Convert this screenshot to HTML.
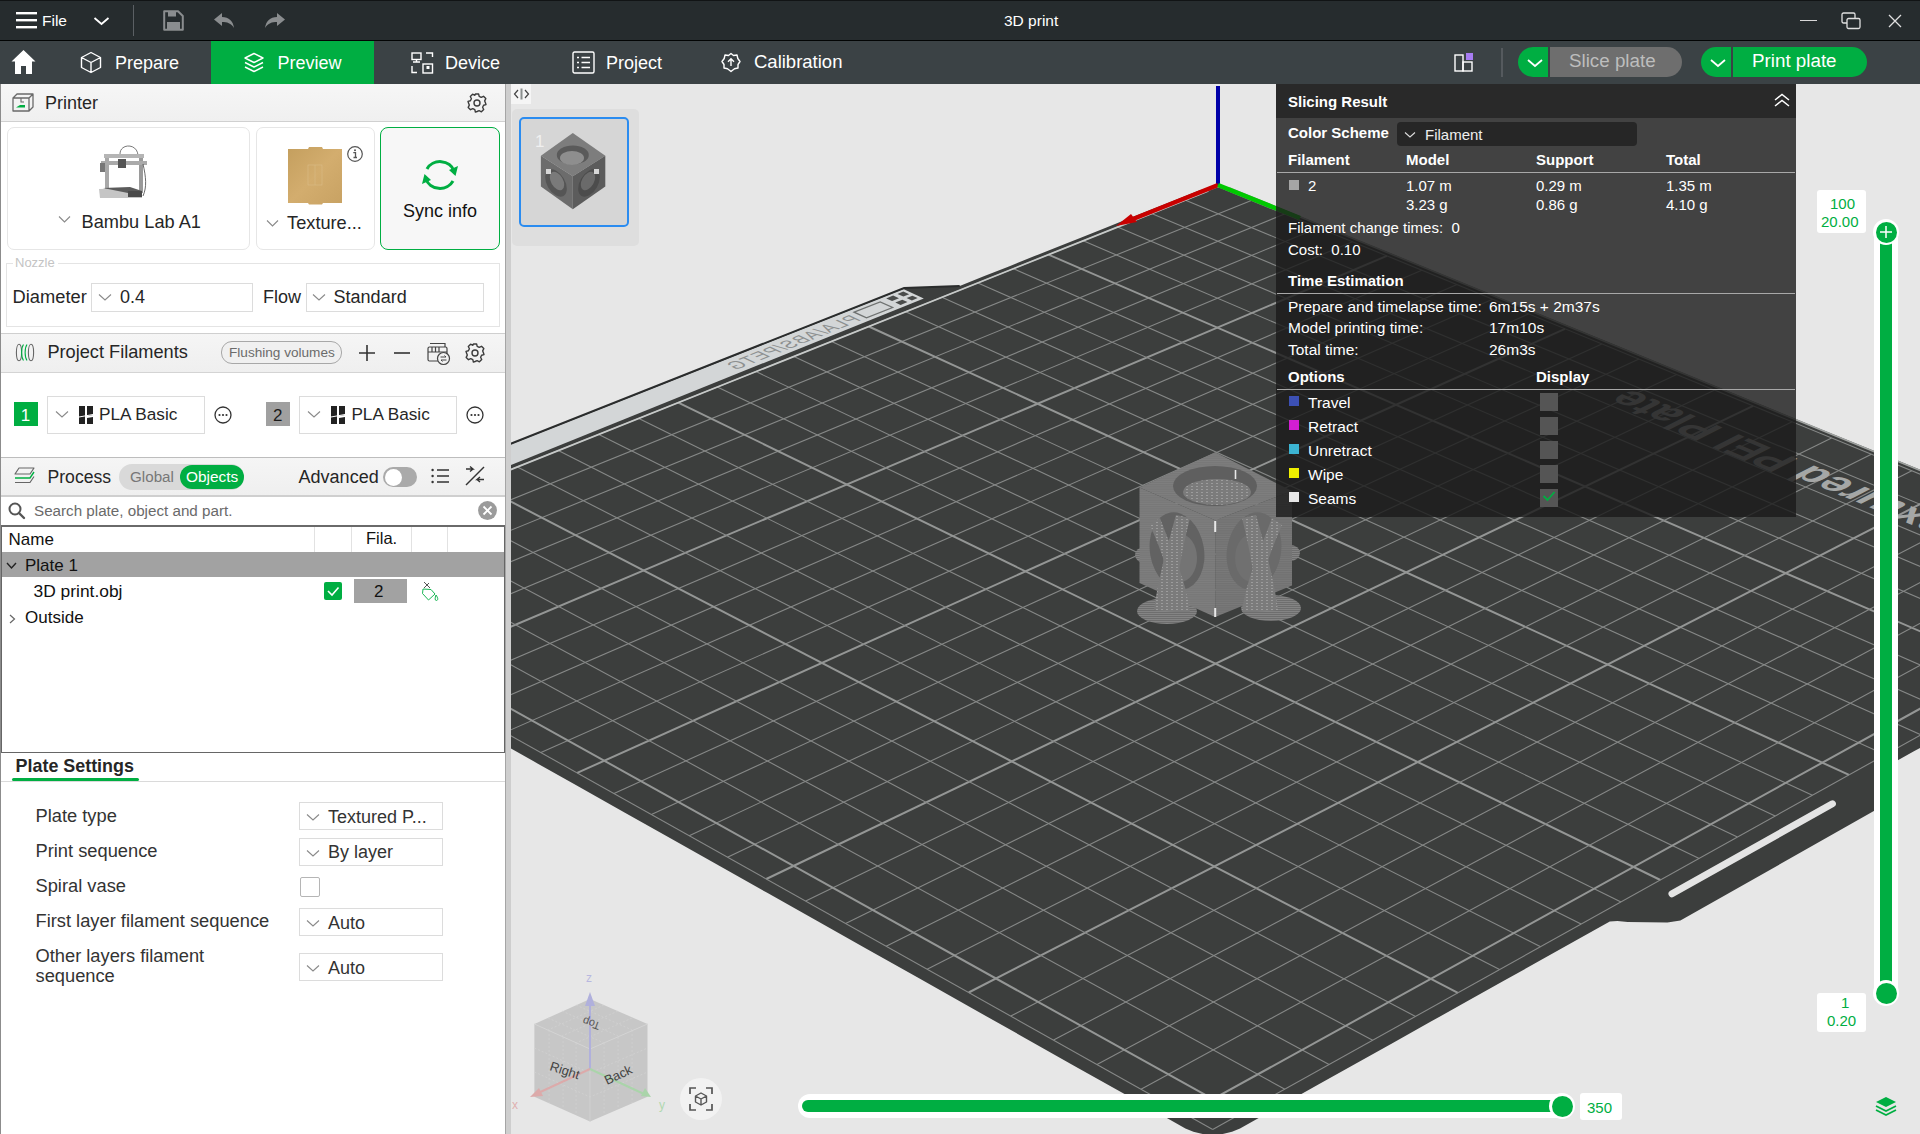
<!DOCTYPE html>
<html><head><meta charset="utf-8"><style>
html,body{margin:0;padding:0;width:1920px;height:1134px;overflow:hidden;background:#e7e7e7;font-family:"Liberation Sans", sans-serif;}
.t{position:absolute;white-space:nowrap;}
.r{position:absolute;box-sizing:border-box;}
svg.r{overflow:visible}
</style></head><body>
<div class="r" style="left:0px;top:0px;width:1920px;height:41px;background:#262c2e;border-top:1px solid #111415;border-bottom:1px solid #020404"></div>
<div class="r" style="left:0px;top:41px;width:1920px;height:43px;background:#3b4245"></div>
<svg class="r" style="left:16px;top:11px;" width="21" height="18" viewBox="0 0 21 18"><rect x="0" y="1" width="21" height="2.4" fill="#fff"/><rect x="0" y="8" width="21" height="2.4" fill="#fff"/><rect x="0" y="15" width="21" height="2.4" fill="#fff"/></svg>
<div class="t" style="left:42px;top:12.9px;font-size:15.5px;line-height:15.5px;color:#fff;font-weight:400;">File</div>
<svg class="r" style="left:93px;top:16px;" width="17" height="10" viewBox="0 0 17 10"><path d="M1.5,2 L8.5,8 L15.5,2" fill="none" stroke="#fff" stroke-width="1.8"/></svg>
<div class="r" style="left:133px;top:5px;width:1px;height:31px;background:#5b6064"></div>
<svg class="r" style="left:163px;top:10px;" width="21" height="21" viewBox="0 0 21 21"><path d="M1.2,1.2 H15 L19.8,6 V19.8 H1.2 Z" fill="none" stroke="#8a8d8f" stroke-width="2" stroke-linejoin="round"/><rect x="5" y="1.5" width="8" height="5" fill="#8a8d8f"/><rect x="4" y="12" width="13" height="7" fill="#8a8d8f"/></svg>
<svg class="r" style="left:213px;top:12px;" width="22" height="17" viewBox="0 0 22 17"><path d="M9,1 L1,7.5 L9,14 V10 C14,10 18,11 21,16 C20,9 16,5 9,5 Z" fill="#8a8d8f"/></svg>
<svg class="r" style="left:264px;top:12px;" width="22" height="17" viewBox="0 0 22 17"><path d="M13,1 L21,7.5 L13,14 V10 C8,10 4,11 1,16 C2,9 6,5 13,5 Z" fill="#8a8d8f"/></svg>
<div class="t" style="left:1004px;top:12.9px;font-size:15.5px;line-height:15.5px;color:#fff;font-weight:400;">3D print</div>
<div class="r" style="left:1800px;top:19.5px;width:17px;height:1.3000000000000007px;background:#d8d8d8"></div>
<svg class="r" style="left:1841px;top:12px;" width="21" height="18" viewBox="0 0 21 18"><rect x="1" y="1" width="13" height="10" rx="1.5" fill="none" stroke="#e0e0e0" stroke-width="1.3"/><rect x="6" y="6.5" width="13" height="10" rx="1.5" fill="#262c2e" stroke="#e0e0e0" stroke-width="1.3"/></svg>
<svg class="r" style="left:1888px;top:14px;" width="14" height="14" viewBox="0 0 14 14"><path d="M1,1 L13,13 M13,1 L1,13" stroke="#e0e0e0" stroke-width="1.3"/></svg>
<svg class="r" style="left:11px;top:49px;" width="25" height="26" viewBox="0 0 25 26"><path d="M12.5,1 L0.5,12.5 H4 V25 H10 V17 H15 V25 H21 V12.5 H24.5 Z" fill="#fff"/></svg>
<svg class="r" style="left:80px;top:51px;" width="22" height="23" viewBox="0 0 22 23"><path d="M11,1.5 L20.5,6.5 V16.5 L11,21.5 L1.5,16.5 V6.5 Z M1.5,6.5 L11,11.5 L20.5,6.5 M11,11.5 V21.5" fill="none" stroke="#fff" stroke-width="1.4" stroke-linejoin="round"/></svg>
<div class="t" style="left:115px;top:53.8px;font-size:18px;line-height:18px;color:#fff;font-weight:400;">Prepare</div>
<div class="r" style="left:211px;top:41px;width:163px;height:43px;background:#00ae42"></div>
<svg class="r" style="left:243px;top:52px;" width="22" height="22" viewBox="0 0 22 22"><path d="M11,1.5 L20,6 L11,10.5 L2,6 Z" fill="none" stroke="#fff" stroke-width="1.4" stroke-linejoin="round"/><path d="M2,10.5 L11,15 L20,10.5 M2,15 L11,19.5 L20,15" fill="none" stroke="#fff" stroke-width="1.4" stroke-linejoin="round"/></svg>
<div class="t" style="left:277.5px;top:53.8px;font-size:18px;line-height:18px;color:#fff;font-weight:400;">Preview</div>
<svg class="r" style="left:411px;top:52px;" width="23" height="22" viewBox="0 0 23 22"><rect x="1" y="1" width="9" height="6.5" fill="none" stroke="#fff" stroke-width="1.4"/><path d="M5.5,7.5 V10 M2,10 H9" stroke="#fff" stroke-width="1.4"/><path d="M15,1 H21.5 V5 M1,14 V20.5 H6" fill="none" stroke="#fff" stroke-width="1.4"/><rect x="12" y="12" width="9.5" height="9" fill="none" stroke="#fff" stroke-width="1.4"/><rect x="15.5" y="14" width="3" height="3" fill="#fff"/></svg>
<div class="t" style="left:445px;top:53.8px;font-size:18px;line-height:18px;color:#fff;font-weight:400;">Device</div>
<svg class="r" style="left:572px;top:51px;" width="23" height="23" viewBox="0 0 23 23"><rect x="1" y="1" width="21" height="21" rx="1.5" fill="none" stroke="#fff" stroke-width="1.4"/><path d="M5,6.5 H7 M9.5,6.5 H18 M5,11.5 H7 M9.5,11.5 H18 M5,16.5 H7 M9.5,16.5 H18" stroke="#fff" stroke-width="1.4"/></svg>
<div class="t" style="left:606px;top:53.8px;font-size:18px;line-height:18px;color:#fff;font-weight:400;">Project</div>
<svg class="r" style="left:721px;top:52px;" width="20" height="21" viewBox="0 0 20 21"><path d="M10,1.5 L12.5,3.5 L16,3 L16.8,6.5 L19,9.5 L17,12.5 L17,16 L13.5,16.8 L10,19.5 L6.5,16.8 L3,16 L3,12.5 L1,9.5 L3.2,6.5 L4,3 L7.5,3.5 Z" fill="none" stroke="#fff" stroke-width="1.4" stroke-linejoin="round"/><path d="M10,14 V7 M7,9.8 L10,6.8 L13,9.8" fill="none" stroke="#fff" stroke-width="1.4"/></svg>
<div class="t" style="left:754px;top:53.3px;font-size:18.5px;line-height:18.5px;color:#fff;font-weight:400;">Calibration</div>
<svg class="r" style="left:1454px;top:52px;" width="21" height="20" viewBox="0 0 21 20"><rect x="1" y="3" width="8" height="16" fill="none" stroke="#fff" stroke-width="1.4"/><rect x="9" y="10" width="9" height="9" fill="none" stroke="#fff" stroke-width="1.4"/><rect x="12" y="1" width="7" height="7" fill="#a77cf2"/></svg>
<div class="r" style="left:1501px;top:48px;width:2px;height:29px;background:#555a5e"></div>
<div class="r" style="left:1518px;top:47px;width:30px;height:30px;background:#00ae42;border-radius:15px 0 0 15px"></div>
<svg class="r" style="left:1526px;top:57px;" width="18" height="12" viewBox="0 0 18 12"><path d="M2,3 L9,9 L16,3" fill="none" stroke="#fff" stroke-width="1.8"/></svg>
<div class="r" style="left:1550px;top:47px;width:132px;height:30px;background:#6e6e6e;border-radius:0 15px 15px 0"></div>
<div class="t" style="left:1569px;top:52.1px;font-size:18.8px;line-height:18.8px;color:#bdbdbd;font-weight:400;">Slice plate</div>
<div class="r" style="left:1701px;top:47px;width:30px;height:30px;background:#00ae42;border-radius:15px 0 0 15px"></div>
<svg class="r" style="left:1709px;top:57px;" width="18" height="12" viewBox="0 0 18 12"><path d="M2,3 L9,9 L16,3" fill="none" stroke="#fff" stroke-width="1.8"/></svg>
<div class="r" style="left:1733px;top:47px;width:134px;height:30px;background:#00ae42;border-radius:0 15px 15px 0"></div>
<div class="t" style="left:1752px;top:52.1px;font-size:18.8px;line-height:18.8px;color:#fff;font-weight:400;">Print plate</div>
<div class="r" style="left:0px;top:84px;width:505px;height:1050px;background:#fff;border-left:1px solid #8c8c8c"></div>
<div class="r" style="left:505px;top:84px;width:6px;height:1050px;background:#cecece;border-left:1px solid #a5a5a5"></div>
<div class="r" style="left:1px;top:84px;width:504px;height:38px;background:linear-gradient(#f6f6f6,#f0f0f0);border-bottom:1px solid #d0d0d0"></div>
<svg class="r" style="left:12px;top:93px;" width="22" height="19" viewBox="0 0 22 19"><path d="M1,5 L5,1 H21 V14 L17,18 H1 Z M1,5 H17 V18 M17,5 L21,1" fill="none" stroke="#6a6a6a" stroke-width="1.3" stroke-linejoin="round"/><path d="M9,5 V9 H12" fill="none" stroke="#6a6a6a" stroke-width="1.1"/><path d="M4,14.5 L8,12 H13 V14.5 Z" fill="#00ae42"/></svg>
<div class="t" style="left:45px;top:94.2px;font-size:18px;line-height:18px;color:#262626;font-weight:400;">Printer</div>
<svg class="r" style="left:467px;top:93px;" width="20" height="20" viewBox="0 0 20 20"><g transform="translate(10,10)"><path d="M-1.6,-9 H1.6 L2.2,-6.6 L4.2,-5.6 L6.5,-6.7 L8.8,-4.4 L7.7,-2.1 L8.5,-0.1 L9,1.6 L6.6,2.2 L5.6,4.2 L6.7,6.5 L4.4,8.8 L2.1,7.7 L0.1,8.5 L-1.6,9 L-2.2,6.6 L-4.2,5.6 L-6.5,6.7 L-8.8,4.4 L-7.7,2.1 L-8.5,0.1 L-9,-1.6 L-6.6,-2.2 L-5.6,-4.2 L-6.7,-6.5 L-4.4,-8.8 L-2.1,-7.7 Z" fill="none" stroke="#3c3c3c" stroke-width="1.4" stroke-linejoin="round"/><circle r="3" fill="none" stroke="#3c3c3c" stroke-width="1.4"/></g></svg>
<div class="r" style="left:6.5px;top:127px;width:243.0px;height:122.5px;border:1px solid #e6e6e6;border-radius:7px;background:#fff"></div>
<svg class="r" style="left:98px;top:142px;" width="50" height="56" viewBox="0 0 50 56"><path d="M22,12 C22,1 40,1 40,14" fill="none" stroke="#555" stroke-width="0.8"/>
<rect x="7" y="13" width="4" height="38" fill="#a8a8a8"/><rect x="41" y="13" width="4" height="38" fill="#9a9a9a"/>
<rect x="6" y="12" width="40" height="4" fill="#b5b5b5"/><rect x="3" y="19" width="46" height="4" fill="#aaa"/>
<rect x="20" y="17" width="8" height="9" fill="#555"/><rect x="2" y="21" width="5" height="9" fill="#777"/>
<path d="M45,22 C48,35 49,45 45,54" fill="none" stroke="#444" stroke-width="0.8"/>
<path d="M1,47 L32,46 L44,50 L44,56 L2,56 Z" fill="#c5c5c5"/><path d="M5,46 L32,45 L44,49 L30,51 Z" fill="#5b5b5b"/><rect x="30" y="49" width="14" height="6" fill="#4a4a4a"/></svg>
<svg class="r" style="left:58px;top:215px;" width="13" height="9" viewBox="0 0 13 9"><path d="M1,1.5 L6.5,7 L12,1.5" fill="none" stroke="#8a8a8a" stroke-width="1.1"/></svg>
<div class="t" style="left:81.6px;top:212.6px;font-size:18.2px;line-height:18.2px;color:#262626;font-weight:400;">Bambu Lab A1</div>
<div class="r" style="left:255.5px;top:127px;width:119.0px;height:122.5px;border:1px solid #e6e6e6;border-radius:7px;background:#fff"></div>
<svg class="r" style="left:288px;top:146px;" width="55" height="59" viewBox="0 0 55 59"><defs><linearGradient id="gold" x1="0" y1="0" x2="1" y2="1"><stop offset="0" stop-color="#c49f5e"/><stop offset="0.5" stop-color="#d3ad6e"/><stop offset="1" stop-color="#c8a263"/></linearGradient></defs><path d="M0,3 H20 L21,1 H34 L35,3 H54 V57 H35 L34,58.5 H21 L20,57 H0 Z" fill="url(#gold)"/><rect x="20" y="19" width="14" height="20" fill="none" stroke="#d9bc88" stroke-width="0.6"/><path d="M27,19 V39" stroke="#d9bc88" stroke-width="0.6"/></svg>
<svg class="r" style="left:346px;top:145px;" width="18" height="18" viewBox="0 0 18 18"><circle cx="9" cy="9" r="7.3" fill="none" stroke="#555" stroke-width="1.2"/><circle cx="9" cy="5.2" r="1" fill="#555"/><path d="M7.3,7.6 H9.5 V12.3 M7.5,12.5 H11" fill="none" stroke="#555" stroke-width="1.3"/></svg>
<svg class="r" style="left:266px;top:219px;" width="13" height="9" viewBox="0 0 13 9"><path d="M1,1.5 L6.5,7 L12,1.5" fill="none" stroke="#8a8a8a" stroke-width="1.1"/></svg>
<div class="t" style="left:287.1px;top:214.3px;font-size:18.2px;line-height:18.2px;color:#262626;font-weight:400;">Texture...</div>
<div class="r" style="left:380px;top:127px;width:120px;height:122.5px;border:1.5px solid #00ae42;border-radius:8px;background:#f7f7f7"></div>
<svg class="r" style="left:420px;top:158px;" width="40" height="34" viewBox="0 0 40 34"><path d="M34,13 A14.5,13 0 0 0 7,11" fill="none" stroke="#00ae42" stroke-width="3"/><path d="M6,21 A14.5,13 0 0 0 33,23" fill="none" stroke="#00ae42" stroke-width="3"/><path d="M29,12 L38,8 L35.5,18 Z" fill="#00ae42"/><path d="M11,22 L2,26 L4.5,16 Z" fill="#00ae42"/></svg>
<div class="t" style="left:403px;top:201.8px;font-size:18px;line-height:18px;color:#111;font-weight:400;">Sync info</div>
<div class="r" style="left:6px;top:262.5px;width:493.5px;height:64.5px;border:1px solid #e4e4e4"></div>
<div class="r" style="left:13px;top:258px;width:45px;height:10px;background:#fff"></div>
<div class="t" style="left:15px;top:256.0px;font-size:13px;line-height:13px;color:#c4c4c4;font-weight:400;">Nozzle</div>
<div class="t" style="left:12.6px;top:287.5px;font-size:18.3px;line-height:18.3px;color:#262626;font-weight:400;">Diameter</div>
<div class="r" style="left:91px;top:283px;width:161.5px;height:28.80000000000001px;border:1px solid #dcdcdc;background:#fff"></div>
<svg class="r" style="left:98px;top:293px;" width="14" height="9" viewBox="0 0 14 9"><path d="M1,1.5 L7,7 L13,1.5" fill="none" stroke="#8a8a8a" stroke-width="1.1"/></svg>
<div class="t" style="left:120px;top:287.8px;font-size:18px;line-height:18px;color:#262626;font-weight:400;">0.4</div>
<div class="t" style="left:263px;top:287.8px;font-size:18px;line-height:18px;color:#262626;font-weight:400;">Flow</div>
<div class="r" style="left:305.5px;top:283px;width:178.0px;height:28.80000000000001px;border:1px solid #dcdcdc;background:#fff"></div>
<svg class="r" style="left:312px;top:293px;" width="14" height="9" viewBox="0 0 14 9"><path d="M1,1.5 L7,7 L13,1.5" fill="none" stroke="#8a8a8a" stroke-width="1.1"/></svg>
<div class="t" style="left:333.6px;top:287.8px;font-size:18px;line-height:18px;color:#262626;font-weight:400;">Standard</div>
<div class="r" style="left:1px;top:333px;width:504px;height:40px;background:linear-gradient(#f5f5f5,#efefef);border-top:1px solid #cfcfcf;border-bottom:1px solid #d4d4d4"></div>
<svg class="r" style="left:15px;top:343px;" width="20" height="19" viewBox="0 0 20 19"><ellipse cx="4" cy="9.5" rx="2.6" ry="8.2" fill="none" stroke="#666" stroke-width="1.1"/><ellipse cx="16" cy="9.5" rx="2.6" ry="8.2" fill="none" stroke="#666" stroke-width="1.1"/><path d="M8.5,1.5 C6,5 6,14 8.5,17.5 M12,1.5 C9.5,5 9.5,14 12,17.5" fill="none" stroke="#00ae42" stroke-width="1.1"/></svg>
<div class="t" style="left:47.4px;top:342.9px;font-size:18.2px;line-height:18.2px;color:#262626;font-weight:400;">Project Filaments</div>
<div class="r" style="left:221px;top:341.3px;width:121px;height:22.30000000000001px;border:1px solid #a8a8a8;border-radius:11px;background:#f0f0f0"></div>
<div class="t" style="left:229px;top:346.0px;font-size:13.6px;line-height:13.6px;color:#6b6b6b;font-weight:400;">Flushing volumes</div>
<svg class="r" style="left:358px;top:344px;" width="18" height="18" viewBox="0 0 18 18"><path d="M9,1 V17 M1,9 H17" stroke="#333" stroke-width="1.6"/></svg>
<svg class="r" style="left:393px;top:344px;" width="18" height="18" viewBox="0 0 18 18"><path d="M1,9 H17" stroke="#333" stroke-width="1.6"/></svg>
<svg class="r" style="left:427px;top:342px;" width="24" height="23" viewBox="0 0 24 23"><rect x="1" y="5" width="19" height="14" rx="1.5" fill="none" stroke="#444" stroke-width="1.2"/><path d="M3,1.5 H18 V5 M5,5 V10 M8.5,5 V10 M12,5 V10 M1,10 H20" fill="none" stroke="#444" stroke-width="1.2"/><circle cx="16.5" cy="16.5" r="6" fill="#f2f2f2" stroke="#444" stroke-width="1.2"/><path d="M13.5,15 H19 L17.5,13.5 M19.5,18 H14 L15.5,19.5" fill="none" stroke="#444" stroke-width="1"/></svg>
<svg class="r" style="left:465px;top:343px;" width="20" height="20" viewBox="0 0 20 20"><g transform="translate(10,10)"><path d="M-1.6,-9 H1.6 L2.2,-6.6 L4.2,-5.6 L6.5,-6.7 L8.8,-4.4 L7.7,-2.1 L8.5,-0.1 L9,1.6 L6.6,2.2 L5.6,4.2 L6.7,6.5 L4.4,8.8 L2.1,7.7 L0.1,8.5 L-1.6,9 L-2.2,6.6 L-4.2,5.6 L-6.5,6.7 L-8.8,4.4 L-7.7,2.1 L-8.5,0.1 L-9,-1.6 L-6.6,-2.2 L-5.6,-4.2 L-6.7,-6.5 L-4.4,-8.8 L-2.1,-7.7 Z" fill="none" stroke="#3c3c3c" stroke-width="1.4" stroke-linejoin="round"/><circle r="3" fill="none" stroke="#3c3c3c" stroke-width="1.4"/></g></svg>
<div class="r" style="left:13.75px;top:402px;width:24.0px;height:24px;background:#00ae42"></div>
<div class="t" style="left:20.75px;top:406.6px;font-size:17px;line-height:17px;color:#fff;font-weight:400;">1</div>
<div class="r" style="left:47px;top:396px;width:157.6px;height:37.5px;border:1px solid #dcdcdc;background:#fff"></div>
<svg class="r" style="left:55px;top:410px;" width="14" height="9" viewBox="0 0 14 9"><path d="M1,1.5 L7,7 L13,1.5" fill="none" stroke="#8a8a8a" stroke-width="1.1"/></svg>
<svg class="r" style="left:79px;top:406px;" width="14" height="18" viewBox="0 0 14 18"><path d="M0,0 H6 V18 H0 Z M8,0 H14 V9 L8,10 Z M8,12 L14,11 V18 H8 Z M0,10 L6,8.5" fill="#222"/><path d="M0,11 L14,8.5" stroke="#fff" stroke-width="1"/></svg>
<div class="t" style="left:99px;top:406.4px;font-size:17.2px;line-height:17.2px;color:#262626;font-weight:400;">PLA Basic</div>
<svg class="r" style="left:213.5px;top:406px;" width="18" height="18" viewBox="0 0 18 18"><circle cx="9" cy="9" r="8" fill="none" stroke="#333" stroke-width="1.3"/><circle cx="5.5" cy="9" r="1.1" fill="#333"/><circle cx="9" cy="9" r="1.1" fill="#333"/><circle cx="12.5" cy="9" r="1.1" fill="#333"/></svg>
<div class="r" style="left:266px;top:402px;width:24px;height:24px;background:#a0a0a0"></div>
<div class="t" style="left:273px;top:406.6px;font-size:17px;line-height:17px;color:#1a1a1a;font-weight:400;">2</div>
<div class="r" style="left:299.4px;top:396px;width:157.60000000000002px;height:37.5px;border:1px solid #dcdcdc;background:#fff"></div>
<svg class="r" style="left:307.4px;top:410px;" width="14" height="9" viewBox="0 0 14 9"><path d="M1,1.5 L7,7 L13,1.5" fill="none" stroke="#8a8a8a" stroke-width="1.1"/></svg>
<svg class="r" style="left:331.4px;top:406px;" width="14" height="18" viewBox="0 0 14 18"><path d="M0,0 H6 V18 H0 Z M8,0 H14 V9 L8,10 Z M8,12 L14,11 V18 H8 Z M0,10 L6,8.5" fill="#222"/><path d="M0,11 L14,8.5" stroke="#fff" stroke-width="1"/></svg>
<div class="t" style="left:351.4px;top:406.4px;font-size:17.2px;line-height:17.2px;color:#262626;font-weight:400;">PLA Basic</div>
<svg class="r" style="left:466px;top:406px;" width="18" height="18" viewBox="0 0 18 18"><circle cx="9" cy="9" r="8" fill="none" stroke="#333" stroke-width="1.3"/><circle cx="5.5" cy="9" r="1.1" fill="#333"/><circle cx="9" cy="9" r="1.1" fill="#333"/><circle cx="12.5" cy="9" r="1.1" fill="#333"/></svg>
<div class="r" style="left:1px;top:457px;width:504px;height:40px;background:linear-gradient(#f5f5f5,#efefef);border-top:1px solid #bdbdbd;border-bottom:2px solid #cfcfcf"></div>
<svg class="r" style="left:14px;top:467px;" width="21" height="18" viewBox="0 0 21 18"><path d="M5,1 H20 L16,7 H1 Z" fill="none" stroke="#666" stroke-width="1.2" stroke-linejoin="round"/><path d="M1,11 H16 L20,5" fill="none" stroke="#00ae42" stroke-width="1.4"/><path d="M1,15.5 H16 L20,9.5" fill="none" stroke="#666" stroke-width="1.2"/></svg>
<div class="t" style="left:47.5px;top:469.1px;font-size:17.6px;line-height:17.6px;color:#262626;font-weight:400;">Process</div>
<div class="r" style="left:119px;top:464px;width:125px;height:26px;background:#d9d9d9;border-radius:13px"></div>
<div class="r" style="left:180px;top:465px;width:64px;height:24px;background:#00ae42;border-radius:12px"></div>
<div class="t" style="left:130px;top:469.1px;font-size:15.2px;line-height:15.2px;color:#777;font-weight:400;">Global</div>
<div class="t" style="left:186px;top:469.0px;font-size:15.4px;line-height:15.4px;color:#fff;font-weight:400;">Objects</div>
<div class="t" style="left:298.6px;top:467.8px;font-size:18px;line-height:18px;color:#262626;font-weight:400;">Advanced</div>
<div class="r" style="left:383px;top:467px;width:34px;height:20px;background:#aaa;border-radius:10px"></div>
<div class="r" style="left:384.5px;top:468.5px;width:17.0px;height:17.0px;background:#fff;border-radius:50%"></div>
<svg class="r" style="left:431px;top:466px;" width="19" height="20" viewBox="0 0 19 20"><path d="M6,4 H18 M6,10 H18 M6,16 H18" stroke="#333" stroke-width="1.5"/><circle cx="1.6" cy="4" r="1.2" fill="#333"/><circle cx="1.6" cy="10" r="1.2" fill="#333"/><circle cx="1.6" cy="16" r="1.2" fill="#333"/></svg>
<svg class="r" style="left:465px;top:466px;" width="20" height="20" viewBox="0 0 20 20"><path d="M1,19 L19,1" stroke="#333" stroke-width="1.4"/><path d="M1,3 H8 L5,0.5 M8,3 L5,5.5" fill="none" stroke="#333" stroke-width="1.4"/><path d="M19,13.5 H12 L15,11 M12,13.5 L15,16" fill="none" stroke="#333" stroke-width="1.4"/></svg>
<svg class="r" style="left:8px;top:502px;" width="18" height="18" viewBox="0 0 18 18"><circle cx="7" cy="7" r="5.5" fill="none" stroke="#555" stroke-width="2"/><path d="M11,11 L16,16" stroke="#555" stroke-width="2.4" stroke-linecap="round"/></svg>
<div class="t" style="left:34px;top:502.5px;font-size:15.2px;line-height:15.2px;color:#6a6a6a;font-weight:400;">Search plate, object and part.</div>
<svg class="r" style="left:478px;top:501px;" width="19" height="19" viewBox="0 0 19 19"><circle cx="9.5" cy="9.5" r="9.4" fill="#9b9b9b"/><path d="M5.5,5.5 L13.5,13.5 M13.5,5.5 L5.5,13.5" stroke="#fff" stroke-width="1.8"/></svg>
<div class="r" style="left:1px;top:525px;width:503.5px;height:228px;border:1px solid #666;border-top:2px solid #6a6a6a;background:#fff"></div>
<div class="r" style="left:314.4px;top:527px;width:1.0px;height:25px;background:#e2e2e2"></div>
<div class="r" style="left:350.6px;top:527px;width:1.0px;height:25px;background:#e2e2e2"></div>
<div class="r" style="left:410.7px;top:527px;width:1.0px;height:25px;background:#e2e2e2"></div>
<div class="r" style="left:446.6px;top:527px;width:1.0px;height:25px;background:#e2e2e2"></div>
<div class="t" style="left:8.5px;top:530.8px;font-size:17px;line-height:17px;color:#111;font-weight:400;">Name</div>
<div class="t" style="left:366px;top:530.4px;font-size:16.5px;line-height:16.5px;color:#111;font-weight:400;">Fila.</div>
<div class="r" style="left:2px;top:552px;width:501.5px;height:25.299999999999955px;background:#a2a2a2"></div>
<svg class="r" style="left:6px;top:562px;" width="11" height="8" viewBox="0 0 11 8"><path d="M1,1 L5.5,6 L10,1" fill="none" stroke="#222" stroke-width="1.4"/></svg>
<div class="t" style="left:25px;top:556.6px;font-size:17px;line-height:17px;color:#111;font-weight:400;">Plate 1</div>
<div class="t" style="left:33.5px;top:582.8px;font-size:17.4px;line-height:17.4px;color:#111;font-weight:400;">3D print.obj</div>
<div class="r" style="left:324px;top:582px;width:18px;height:18px;background:#00ae42;border-radius:2px"></div>
<svg class="r" style="left:325px;top:583px;" width="16" height="16" viewBox="0 0 16 16"><path d="M3,8 L7,12 L13.5,4.5" fill="none" stroke="#fff" stroke-width="1.6"/></svg>
<div class="r" style="left:354px;top:579px;width:53px;height:24px;background:#a2a2a2"></div>
<div class="t" style="left:374px;top:582.6px;font-size:17px;line-height:17px;color:#111;font-weight:400;">2</div>
<svg class="r" style="left:419px;top:580px;" width="21" height="21" viewBox="0 0 21 21"><path d="M4,9 L12,9.5 L16,14 L9.5,20 L3.5,13.5 Z" fill="none" stroke="#00ae42" stroke-width="0.9"/><path d="M5,2 L11,8 M5,8 L10,3" stroke="#555" stroke-width="1"/><path d="M17,15 C19,18 19.5,20 17.5,20.5 C15.5,20.5 16,18 17,15 Z" fill="none" stroke="#00ae42" stroke-width="0.9"/></svg>
<svg class="r" style="left:9px;top:614px;" width="7" height="10" viewBox="0 0 7 10"><path d="M1,1 L5.5,5 L1,9" fill="none" stroke="#666" stroke-width="1.2"/></svg>
<div class="t" style="left:25px;top:608.6px;font-size:17px;line-height:17px;color:#111;font-weight:400;">Outside</div>
<div class="t" style="left:15.6px;top:757.8px;font-size:17.9px;line-height:17.9px;color:#262626;font-weight:700;">Plate Settings</div>
<div class="r" style="left:12.4px;top:777.8px;width:126.6px;height:3.2000000000000455px;background:#00ae42;border-radius:2px"></div>
<div class="r" style="left:1px;top:781px;width:504px;height:1px;background:#dadada"></div>
<div class="t" style="left:35.5px;top:807.1px;font-size:18.3px;line-height:18.3px;color:#333;font-weight:400;">Plate type</div>
<div class="r" style="left:299px;top:802.4px;width:143.7px;height:28.0px;border:1px solid #dcdcdc;background:#fff"></div>
<svg class="r" style="left:306px;top:813.4px;" width="14" height="9" viewBox="0 0 14 9"><path d="M1,1.5 L7,7 L13,1.5" fill="none" stroke="#8a8a8a" stroke-width="1.1"/></svg>
<div class="t" style="left:328px;top:808.2px;font-size:18px;line-height:18px;color:#333;font-weight:400;">Textured P...</div>
<div class="t" style="left:35.5px;top:841.9px;font-size:18.3px;line-height:18.3px;color:#333;font-weight:400;">Print sequence</div>
<div class="r" style="left:299px;top:837.6px;width:143.7px;height:28.0px;border:1px solid #dcdcdc;background:#fff"></div>
<svg class="r" style="left:306px;top:848.6px;" width="14" height="9" viewBox="0 0 14 9"><path d="M1,1.5 L7,7 L13,1.5" fill="none" stroke="#8a8a8a" stroke-width="1.1"/></svg>
<div class="t" style="left:328px;top:843.4px;font-size:18px;line-height:18px;color:#333;font-weight:400;">By layer</div>
<div class="t" style="left:35.5px;top:912.1px;font-size:18.3px;line-height:18.3px;color:#333;font-weight:400;">First layer filament sequence</div>
<div class="r" style="left:299px;top:907.8px;width:143.7px;height:28.0px;border:1px solid #dcdcdc;background:#fff"></div>
<svg class="r" style="left:306px;top:918.8px;" width="14" height="9" viewBox="0 0 14 9"><path d="M1,1.5 L7,7 L13,1.5" fill="none" stroke="#8a8a8a" stroke-width="1.1"/></svg>
<div class="t" style="left:328px;top:913.6px;font-size:18px;line-height:18px;color:#333;font-weight:400;">Auto</div>
<div class="t" style="left:35.5px;top:876.5px;font-size:18.3px;line-height:18.3px;color:#333;font-weight:400;">Spiral vase</div>
<div class="r" style="left:300.4px;top:876.7px;width:20.0px;height:20.0px;border:1px solid #b5b5b5;border-radius:2px;background:#fff"></div>
<div class="t" style="left:35.5px;top:947.0px;font-size:18.3px;line-height:18.3px;color:#333;font-weight:400;">Other layers filament</div>
<div class="t" style="left:35.5px;top:967.2px;font-size:18.3px;line-height:18.3px;color:#333;font-weight:400;">sequence</div>
<div class="r" style="left:299px;top:952.7px;width:143.7px;height:28.0px;border:1px solid #dcdcdc;background:#fff"></div>
<svg class="r" style="left:306px;top:963.7px;" width="14" height="9" viewBox="0 0 14 9"><path d="M1,1.5 L7,7 L13,1.5" fill="none" stroke="#8a8a8a" stroke-width="1.1"/></svg>
<div class="t" style="left:328px;top:958.5px;font-size:18px;line-height:18px;color:#333;font-weight:400;">Auto</div>
<svg class="r" style="left:511px;top:84px;overflow:hidden" width="1409" height="1050" viewBox="511 84 1409 1050"><path d="M1238.0,190.9 L1232.2,189.1 L1225.5,187.9 L1218.2,187.5 L1211.0,187.9 L1204.2,189.0 L1198.4,190.8 L1175.4,199.9 L1152.1,209.2 L1128.7,218.6 L1105.2,228.0 L1081.4,237.4 L1057.4,247.0 L1033.3,256.6 L1008.9,266.4 L984.4,276.1 L959.7,286.0 L904.1,288.0 L839.6,313.5 L773.7,339.6 L706.4,366.2 L637.7,393.4 L567.6,421.2 L495.9,449.5 L422.7,478.5 L347.8,508.2 L271.2,538.5 L193.0,569.4 L235.7,593.5 L276.2,616.3 L317.4,639.5 L359.2,663.1 L401.7,687.0 L444.8,711.3 L488.7,736.0 L533.2,761.1 L578.5,786.6 L624.5,812.5 L671.3,838.8 L718.8,865.6 L767.2,892.8 L816.4,920.5 L866.4,948.7 L917.3,977.3 L969.0,1006.5 L1021.7,1036.2 L1075.3,1066.4 L1129.9,1097.1 L1185.4,1128.4 L1193.4,1131.8 L1202.7,1134.0 L1212.7,1134.7 L1222.7,1134.0 L1232.0,1131.8 L1240.0,1128.4 L1279.2,1106.5 L1317.9,1084.8 L1356.0,1063.5 L1393.7,1042.4 L1430.9,1021.6 L1467.6,1001.1 L1503.8,980.8 L1539.6,960.8 L1574.9,941.0 L1609.8,921.5 L1617.4,921.0 L1627.8,921.9 L1667.4,922.6 L1680.4,920.6 L1887.1,803.5 L1889.5,797.1 L1886.0,776.9 L1883.3,772.1 L1881.5,769.4 L1913.9,751.3 L1945.8,733.4 L1977.4,715.8 L2008.6,698.3 L2039.4,681.1 L2069.8,664.1 L2099.9,647.2 L2129.6,630.6 L2159.0,614.1 L2188.1,597.9 L2192.1,594.7 L2194.1,591.1 L2193.9,587.1 L2191.5,583.2 L2187.1,579.5 L2180.9,576.4 L2127.1,554.4 L2074.1,532.7 L2021.8,511.3 L1970.3,490.3 L1919.6,469.5 L1869.5,449.1 L1820.2,428.9 L1771.6,409.1 L1723.7,389.5 L1676.5,370.2 L1629.9,351.1 L1583.9,332.3 L1538.6,313.8 L1493.9,295.5 L1449.8,277.5 L1406.3,259.7 L1363.4,242.2 L1321.0,224.9 L1279.2,207.8Z" fill="#3c3e3d"/>
<path d="M903.3,289.1 L179.2,575.5 L203.2,589.1 L923.8,298.4Z" fill="#d3d6d7"/>
<line x1="1229.1" y1="187.8" x2="2194.3" y2="582.5" stroke="#9fa2a0" stroke-width="1.6"/>
<path d="M959.7,286.0 L904.1,288.0 L178.6,575.1" fill="none" stroke="#2a2c2c" stroke-width="2"/>
<path d="M1832.4,803.8 L1672.0,893.8" stroke="#e4e4e4" stroke-width="7" stroke-linecap="round"/>
<line x1="1218.2" y1="186.8" x2="2190.2" y2="584.8" stroke="#868887" stroke-width="1.1"/>
<line x1="1218.2" y1="186.8" x2="233.7" y2="580.3" stroke="#868887" stroke-width="1.1"/>
<line x1="1185.0" y1="200.1" x2="2158.0" y2="602.7" stroke="#868887" stroke-width="1.1"/>
<line x1="1251.3" y1="200.4" x2="266.2" y2="598.5" stroke="#868887" stroke-width="1.1"/>
<line x1="1151.5" y1="213.5" x2="2125.5" y2="620.8" stroke="#868887" stroke-width="1.1"/>
<line x1="1284.6" y1="214.0" x2="299.0" y2="616.9" stroke="#868887" stroke-width="1.1"/>
<line x1="1117.5" y1="227.1" x2="2092.5" y2="639.2" stroke="#868887" stroke-width="1.1"/>
<line x1="1318.4" y1="227.8" x2="332.3" y2="635.6" stroke="#868887" stroke-width="1.1"/>
<line x1="1083.2" y1="240.8" x2="2059.1" y2="657.8" stroke="#868887" stroke-width="1.1"/>
<line x1="1352.5" y1="241.8" x2="365.9" y2="654.4" stroke="#868887" stroke-width="1.1"/>
<line x1="1048.5" y1="254.7" x2="2025.2" y2="676.7" stroke="#949695" stroke-width="2.0"/>
<line x1="1386.9" y1="255.9" x2="400.0" y2="673.6" stroke="#949695" stroke-width="2.0"/>
<line x1="1013.4" y1="268.7" x2="1990.9" y2="695.8" stroke="#868887" stroke-width="1.1"/>
<line x1="1421.8" y1="270.2" x2="434.6" y2="692.9" stroke="#868887" stroke-width="1.1"/>
<line x1="977.9" y1="282.9" x2="1956.2" y2="715.2" stroke="#868887" stroke-width="1.1"/>
<line x1="1457.0" y1="284.6" x2="469.5" y2="712.6" stroke="#868887" stroke-width="1.1"/>
<line x1="941.9" y1="297.3" x2="1920.9" y2="734.8" stroke="#868887" stroke-width="1.1"/>
<line x1="1492.6" y1="299.2" x2="505.0" y2="732.4" stroke="#868887" stroke-width="1.1"/>
<line x1="905.6" y1="311.8" x2="1885.2" y2="754.7" stroke="#868887" stroke-width="1.1"/>
<line x1="1528.6" y1="313.9" x2="540.9" y2="752.6" stroke="#868887" stroke-width="1.1"/>
<line x1="868.8" y1="326.5" x2="1849.0" y2="774.9" stroke="#949695" stroke-width="2.0"/>
<line x1="1565.0" y1="328.8" x2="577.2" y2="772.9" stroke="#949695" stroke-width="2.0"/>
<line x1="831.6" y1="341.4" x2="1812.4" y2="795.3" stroke="#868887" stroke-width="1.1"/>
<line x1="1601.8" y1="343.9" x2="614.0" y2="793.6" stroke="#868887" stroke-width="1.1"/>
<line x1="793.9" y1="356.4" x2="1775.2" y2="816.0" stroke="#868887" stroke-width="1.1"/>
<line x1="1639.0" y1="359.1" x2="651.4" y2="814.5" stroke="#868887" stroke-width="1.1"/>
<line x1="755.9" y1="371.6" x2="1737.4" y2="837.0" stroke="#868887" stroke-width="1.1"/>
<line x1="1676.7" y1="374.5" x2="689.2" y2="835.7" stroke="#868887" stroke-width="1.1"/>
<line x1="717.3" y1="387.0" x2="1699.2" y2="858.4" stroke="#868887" stroke-width="1.1"/>
<line x1="1714.7" y1="390.1" x2="727.5" y2="857.2" stroke="#868887" stroke-width="1.1"/>
<line x1="678.3" y1="402.6" x2="1660.4" y2="880.0" stroke="#949695" stroke-width="2.0"/>
<line x1="1753.2" y1="405.9" x2="766.3" y2="879.0" stroke="#949695" stroke-width="2.0"/>
<line x1="638.8" y1="418.4" x2="1621.0" y2="901.9" stroke="#868887" stroke-width="1.1"/>
<line x1="1792.2" y1="421.8" x2="805.7" y2="901.1" stroke="#868887" stroke-width="1.1"/>
<line x1="598.8" y1="434.4" x2="1581.1" y2="924.1" stroke="#868887" stroke-width="1.1"/>
<line x1="1831.6" y1="438.0" x2="845.6" y2="923.5" stroke="#868887" stroke-width="1.1"/>
<line x1="558.3" y1="450.6" x2="1540.7" y2="946.7" stroke="#868887" stroke-width="1.1"/>
<line x1="1871.4" y1="454.3" x2="886.1" y2="946.2" stroke="#868887" stroke-width="1.1"/>
<line x1="517.4" y1="466.9" x2="1499.6" y2="969.6" stroke="#868887" stroke-width="1.1"/>
<line x1="1911.8" y1="470.8" x2="927.1" y2="969.2" stroke="#868887" stroke-width="1.1"/>
<line x1="475.9" y1="483.5" x2="1457.9" y2="992.8" stroke="#949695" stroke-width="2.0"/>
<line x1="1952.6" y1="487.5" x2="968.7" y2="992.5" stroke="#949695" stroke-width="2.0"/>
<line x1="433.9" y1="500.3" x2="1415.6" y2="1016.4" stroke="#868887" stroke-width="1.1"/>
<line x1="1993.8" y1="504.4" x2="1010.8" y2="1016.1" stroke="#868887" stroke-width="1.1"/>
<line x1="391.4" y1="517.3" x2="1372.7" y2="1040.3" stroke="#868887" stroke-width="1.1"/>
<line x1="2035.6" y1="521.5" x2="1053.6" y2="1040.1" stroke="#868887" stroke-width="1.1"/>
<line x1="348.3" y1="534.5" x2="1329.1" y2="1064.5" stroke="#868887" stroke-width="1.1"/>
<line x1="2077.9" y1="538.8" x2="1097.0" y2="1064.5" stroke="#868887" stroke-width="1.1"/>
<line x1="304.7" y1="551.9" x2="1284.9" y2="1089.2" stroke="#868887" stroke-width="1.1"/>
<line x1="2120.6" y1="556.3" x2="1141.0" y2="1089.2" stroke="#868887" stroke-width="1.1"/>
<line x1="260.5" y1="569.6" x2="1240.0" y2="1114.2" stroke="#949695" stroke-width="2.0"/>
<line x1="2163.9" y1="574.1" x2="1185.6" y2="1114.2" stroke="#949695" stroke-width="2.0"/>
<line x1="233.7" y1="580.3" x2="1212.7" y2="1129.4" stroke="#868887" stroke-width="1.1"/>
<line x1="2190.2" y1="584.8" x2="1212.7" y2="1129.4" stroke="#868887" stroke-width="1.1"/>
<line x1="1208.3" y1="190.8" x2="206.7" y2="591.1" stroke="#c6c9c8" stroke-width="1.8"/>
<g transform="matrix(-4.0700,-1.6949,3.3020,-1.6768,1629.86,388.94)"><text x="0" y="0" font-family="Liberation Sans" font-weight="700" font-size="11.5" fill="#a5a7a6" opacity="1" text-anchor="end" transform="scale(0.85,1)">Textured PEI Plate</text></g>
<g transform="matrix(-3.7755,1.4997,3.2599,1.5230,861.88,320.05)"><text x="0" y="0" font-family="Liberation Sans" font-weight="400" font-size="5.2" fill="#8d9090" text-anchor="start" letter-spacing="0.3" transform="scale(0.82,1)">PLA/ABS/PETG</text></g>
<path d="M854.1,312.2 L880.2,301.9 L892.6,307.5 L866.5,317.9Z" fill="none" stroke="#6f7271" stroke-width="1.3"/>
<path d="M886.2,298.4 L893.1,295.6 L899.0,298.3 L892.1,301.0Z" fill="#4a4c4b"/>
<path d="M897.5,293.9 L903.3,291.6 L909.2,294.2 L903.4,296.5Z" fill="#4a4c4b"/>
<path d="M895.3,302.5 L902.3,299.7 L907.5,302.1 L900.6,304.9Z" fill="#4a4c4b"/>
<path d="M906.6,298.0 L912.4,295.7 L917.7,298.0 L911.9,300.4Z" fill="#4a4c4b"/><path d="M1218,86 V185" stroke="#0000a8" stroke-width="4"/>
<path d="M1218,185 L1128,221" stroke="#c80000" stroke-width="4.5"/><path d="M1116,226 L1131,214 L1137,222 Z" fill="#c80000"/>
<path d="M1218,185 L1300,218" stroke="#00c800" stroke-width="4.5"/></svg>
<svg class="r" style="left:1120px;top:440px;" width="200" height="200" viewBox="0 0 200 200"><defs>
<pattern id="lay" width="4" height="2.2" patternUnits="userSpaceOnUse"><rect width="4" height="2.2" fill="#787878"/><rect y="1.4" width="4" height="0.8" fill="#7f7f7f"/></pattern>
<pattern id="lay2" width="4" height="2.2" patternUnits="userSpaceOnUse"><rect width="4" height="2.2" fill="#727272"/><rect y="1.4" width="4" height="0.8" fill="#7a7a7a"/></pattern>
<pattern id="dots" width="5" height="3" patternUnits="userSpaceOnUse"><rect width="5" height="3" fill="#7b7b7b"/><rect x="1" y="1" width="2" height="1" fill="#9c9c9c"/></pattern>
<pattern id="ring" width="3" height="2" patternUnits="userSpaceOnUse"><rect width="3" height="2" fill="#6e6e6e"/><rect y="1" width="3" height="1" fill="#848484"/></pattern>
</defs>
<ellipse cx="47" cy="171" rx="30" ry="13" fill="url(#ring)"/><ellipse cx="151" cy="168" rx="30" ry="13" fill="url(#ring)"/>
<ellipse cx="25" cy="115" rx="10" ry="8" fill="url(#ring)"/><ellipse cx="170" cy="113" rx="10" ry="8" fill="url(#ring)"/>
<path d="M19.5,47.5 L95.2,80.2 L95.2,177 L19.5,143 Z" fill="url(#lay)"/>
<path d="M95.2,80.2 L172,51 L172,145.5 L95.2,177 Z" fill="url(#lay2)"/>
<path d="M19.5,47.5 L95.2,12.3 L172,51 L95.2,80.2 Z" fill="url(#lay)"/>
<ellipse cx="95" cy="46" rx="42" ry="20" fill="#5f5f5f"/><ellipse cx="97" cy="52" rx="34" ry="13" fill="url(#dots)"/>
<ellipse cx="57" cy="111" rx="27" ry="39" fill="#626262" transform="rotate(-10 57 111)"/>
<ellipse cx="134" cy="111" rx="27" ry="39" fill="#6a6a6a" transform="rotate(10 134 111)"/>
<ellipse cx="60" cy="118" rx="17" ry="24" fill="#747474"/><ellipse cx="132" cy="118" rx="17" ry="24" fill="#707070"/>
<path d="M34,170 C38,140 46,110 56,75 L70,78 C62,110 56,140 56,172 Z" fill="url(#dots)"/>
<path d="M40,78 C52,110 66,140 70,172 L56,172 C52,140 42,112 30,85 Z" fill="url(#dots)"/>
<path d="M158,170 C154,140 146,110 136,75 L122,78 C130,110 136,140 136,172 Z" fill="url(#dots)"/>
<path d="M152,78 C140,110 126,140 122,172 L136,172 C140,140 150,112 162,85 Z" fill="url(#dots)"/>
<path d="M95.2,81 V92 M95.2,168 V177" stroke="#e8e8e8" stroke-width="2"/><path d="M115.5,30 V39" stroke="#e8e8e8" stroke-width="1.6"/></svg>
<div class="r" style="left:511px;top:84px;width:20px;height:20px;background:#f5f5f5"></div>
<svg class="r" style="left:513px;top:87px;" width="17" height="14" viewBox="0 0 17 14"><path d="M5,3 L1.5,7 L5,11 M12,3 L15.5,7 L12,11" fill="none" stroke="#444" stroke-width="1.2"/><path d="M8.5,1.5 V12.5" stroke="#8a8f8e" stroke-width="2"/></svg>
<div class="r" style="left:511.6px;top:108.9px;width:127.39999999999998px;height:137.6px;background:#dedede;border-radius:5px"></div>
<div class="r" style="left:518.9px;top:116.5px;width:110.30000000000007px;height:110.69999999999999px;border:2px solid #2b8cf0;border-radius:5px;background:#d6d6d6"></div>
<svg class="r" style="left:511px;top:84px" width="140" height="170" viewBox="511 84 140 170">
<path d="M572.8,133 L605.3,155.7 L572.8,176.2 L540.9,155.7 Z" fill="#7d7d7d"/>
<path d="M540.9,155.7 L572.8,176.2 L572.8,209.2 L540.9,186.5 Z" fill="#6c6c6c"/>
<path d="M572.8,176.2 L605.3,155.7 L605.3,186.5 L572.8,209.2 Z" fill="#5c5c5c"/>
<ellipse cx="572.8" cy="155" rx="16" ry="9.5" fill="#5a5a5a"/><ellipse cx="572" cy="158" rx="12" ry="7" fill="#8e8e8e"/>
<ellipse cx="556" cy="183" rx="9" ry="15" fill="#555" transform="rotate(-30 556 183)"/><ellipse cx="557" cy="181" rx="6" ry="10" fill="#7a7a7a" transform="rotate(-30 557 181)"/>
<ellipse cx="589" cy="183" rx="9" ry="15" fill="#4c4c4c" transform="rotate(30 589 183)"/><ellipse cx="588" cy="181" rx="6" ry="10" fill="#6a6a6a" transform="rotate(30 588 181)"/>
<rect x="546" y="169" width="5" height="5" fill="#d6d6d6"/><rect x="594" y="169" width="5" height="5" fill="#d6d6d6"/>
</svg>
<div class="t" style="left:535px;top:132.6px;font-size:17px;line-height:17px;color:#f0f0f0;font-weight:400;">1</div>
<svg class="r" style="left:505px;top:960px" width="180" height="174" viewBox="505 960 180 174">
<path d="M590,999 L647.5,1024 L647.5,1096.7 L590,1121.5 L534.4,1096.7 L534.4,1024 Z" fill="#c7c7c7"/>
<path d="M534.4,1024 L590,1049 L647.5,1024" fill="none" stroke="#d4d4d4" stroke-width="1"/>
<path d="M590,1049 V1121.5" stroke="#d0d0d0" stroke-width="1"/>
<path d="M548,1018 L604,1043 M562,1011 L618,1036 M576,1005 L632,1030 M604,1005 L548,1030 M618,1011 L562,1036 M632,1018 L576,1043" stroke="#d2d2d2" stroke-width="0.7" stroke-dasharray="2,2"/>
<path d="M549,1030 V1103 M563,1037 V1109 M576,1043 V1115 M604,1043 V1115 M618,1037 V1109 M632,1030 V1103 M534.4,1048 L590,1073 L647.5,1048 M534.4,1072 L590,1097 L647.5,1072" stroke="#d2d2d2" stroke-width="0.7" stroke-dasharray="2,2" fill="none"/>
<path d="M590,1069 V1003" stroke="#b0b0dc" stroke-width="2"/><path d="M585,1006 L590,992 L595,1006 Z" fill="#b0b0dc"/>
<path d="M590,1069 L536,1094" stroke="#dcaaaa" stroke-width="2"/><path d="M530,1097 L539,1088 L543,1096 Z" fill="#dcaaaa"/>
<path d="M590,1069 L644,1094" stroke="#aad4aa" stroke-width="2"/><path d="M651,1097 L641,1096 L645,1088 Z" fill="#aad4aa"/>
<text x="0" y="0" font-size="11" fill="#555" font-family="Liberation Sans" transform="translate(601,1023) rotate(200)">Top</text>
<text x="0" y="0" font-size="13" fill="#444" font-family="Liberation Sans" transform="translate(549,1070) rotate(18)">Right</text>
<text x="0" y="0" font-size="13" fill="#444" font-family="Liberation Sans" transform="translate(607,1085) rotate(-25)">Back</text>
<text x="586" y="982" font-size="12" fill="#b8b8e0" font-family="Liberation Sans">z</text>
<text x="512" y="1109" font-size="12" fill="#e0b0b0" font-family="Liberation Sans">x</text>
<text x="659" y="1109" font-size="12" fill="#b0d8b0" font-family="Liberation Sans">y</text>
</svg>
<div class="r" style="left:680px;top:1078px;width:42px;height:42px;background:#f2f2f2;border-radius:50%"></div>
<svg class="r" style="left:689px;top:1087px;" width="25" height="25" viewBox="0 0 25 25"><path d="M1,7 V1 H7 M17,1 H23 V7 M23,17 V23 H17 M7,23 H1 V17" fill="none" stroke="#555" stroke-width="1.7"/><path d="M12,6 L17.5,9 V15 L12,18 L6.5,15 V9 Z M6.5,9 L12,12 L17.5,9 M12,12 V18" fill="none" stroke="#555" stroke-width="1.4" stroke-linejoin="round"/></svg>
<div class="r" style="left:798px;top:1094px;width:776px;height:24px;background:#fff;border-radius:12px"></div>
<div class="r" style="left:802px;top:1100px;width:763px;height:12px;background:#00ae42;border-radius:6px"></div>
<div class="r" style="left:1549px;top:1093px;width:26px;height:26px;background:#fff;border-radius:50%"></div>
<div class="r" style="left:1551.5px;top:1095.5px;width:21.0px;height:21.0px;background:#00ae42;border-radius:50%"></div>
<div class="r" style="left:1580px;top:1093px;width:42px;height:27px;background:#fff;border-radius:3px"></div>
<div class="t" style="left:1587px;top:1100.3px;font-size:15px;line-height:15px;color:#00ae42;font-weight:400;">350</div>
<div class="r" style="left:1874px;top:220px;width:24px;height:785px;background:#fff;border-radius:12px"></div>
<div class="r" style="left:1880px;top:232px;width:12px;height:761px;background:#00ae42"></div>
<div class="r" style="left:1873px;top:219px;width:26px;height:26px;background:#fff;border-radius:50%"></div>
<div class="r" style="left:1875.5px;top:221.5px;width:21.0px;height:21.0px;background:#00ae42;border-radius:50%"></div>
<svg class="r" style="left:1879px;top:225px;" width="14" height="14" viewBox="0 0 14 14"><path d="M7,1 V13 M1,7 H13" stroke="#fff" stroke-width="1.5"/></svg>
<div class="r" style="left:1873px;top:980px;width:26px;height:26px;background:#fff;border-radius:50%"></div>
<div class="r" style="left:1875.5px;top:982.5px;width:21.0px;height:21.0px;background:#00ae42;border-radius:50%"></div>
<div class="r" style="left:1817px;top:190px;width:49px;height:43px;background:#fff;border-radius:3px"></div>
<div class="t" style="left:1830px;top:196.3px;font-size:15px;line-height:15px;color:#00ae42;font-weight:400;">100</div>
<div class="t" style="left:1821px;top:214.3px;font-size:15px;line-height:15px;color:#00ae42;font-weight:400;">20.00</div>
<div class="r" style="left:1817px;top:993px;width:49px;height:39px;background:#fff;border-radius:3px"></div>
<div class="t" style="left:1841px;top:995.3px;font-size:15px;line-height:15px;color:#00ae42;font-weight:400;">1</div>
<div class="t" style="left:1827px;top:1013.3px;font-size:15px;line-height:15px;color:#00ae42;font-weight:400;">0.20</div>
<svg class="r" style="left:1875px;top:1096px;" width="22" height="20" viewBox="0 0 22 20"><path d="M11,1 L21,6 L11,11 L1,6 Z" fill="#00ae42"/><path d="M1,10 L11,15 L21,10 M1,14 L11,19 L21,14" fill="none" stroke="#00ae42" stroke-width="1.8"/></svg>
<div class="r" style="left:1276px;top:84px;width:520px;height:433px;background:rgba(27,27,27,0.81)"></div>
<div class="r" style="left:1276px;top:84px;width:520px;height:34px;background:rgba(22,22,22,0.55)"></div>
<div class="t" style="left:1288px;top:94.3px;font-size:15px;line-height:15px;color:#fff;font-weight:700;">Slicing Result</div>
<svg class="r" style="left:1773px;top:93px;" width="18" height="14" viewBox="0 0 18 14"><path d="M2,7 L9,1.5 L16,7 M2,13 L9,7.5 L16,13" fill="none" stroke="#fff" stroke-width="1.5"/></svg>
<div class="t" style="left:1288px;top:124.7px;font-size:15px;line-height:15px;color:#fff;font-weight:700;">Color Scheme</div>
<div class="r" style="left:1397px;top:122px;width:240px;height:24px;background:rgba(30,30,30,0.75);border-radius:4px"></div>
<svg class="r" style="left:1404px;top:131px;" width="12" height="8" viewBox="0 0 12 8"><path d="M1,1.5 L6,6 L11,1.5" fill="none" stroke="#ddd" stroke-width="1.1"/></svg>
<div class="t" style="left:1425px;top:127.3px;font-size:15px;line-height:15px;color:#eee;font-weight:400;">Filament</div>
<div class="t" style="left:1288px;top:152.3px;font-size:15px;line-height:15px;color:#fff;font-weight:700;">Filament</div>
<div class="t" style="left:1406px;top:152.3px;font-size:15px;line-height:15px;color:#fff;font-weight:700;">Model</div>
<div class="t" style="left:1536px;top:152.3px;font-size:15px;line-height:15px;color:#fff;font-weight:700;">Support</div>
<div class="t" style="left:1666px;top:152.3px;font-size:15px;line-height:15px;color:#fff;font-weight:700;">Total</div>
<div class="r" style="left:1277px;top:172px;width:518px;height:1px;background:#a8a8a8"></div>
<div class="r" style="left:1289px;top:180px;width:10px;height:10px;background:#a5a5a5"></div>
<div class="t" style="left:1308px;top:177.8px;font-size:15px;line-height:15px;color:#fff;font-weight:400;">2</div>
<div class="t" style="left:1406px;top:177.8px;font-size:15px;line-height:15px;color:#fff;font-weight:400;">1.07 m</div>
<div class="t" style="left:1406px;top:196.5px;font-size:15px;line-height:15px;color:#fff;font-weight:400;">3.23 g</div>
<div class="t" style="left:1536px;top:177.8px;font-size:15px;line-height:15px;color:#fff;font-weight:400;">0.29 m</div>
<div class="t" style="left:1536px;top:196.5px;font-size:15px;line-height:15px;color:#fff;font-weight:400;">0.86 g</div>
<div class="t" style="left:1666px;top:177.8px;font-size:15px;line-height:15px;color:#fff;font-weight:400;">1.35 m</div>
<div class="t" style="left:1666px;top:196.5px;font-size:15px;line-height:15px;color:#fff;font-weight:400;">4.10 g</div>
<div class="t" style="left:1288px;top:219.7px;font-size:15px;line-height:15px;color:#fff;font-weight:400;">Filament change times:&nbsp; 0</div>
<div class="t" style="left:1288px;top:241.8px;font-size:15px;line-height:15px;color:#fff;font-weight:400;">Cost:&nbsp; 0.10</div>
<div class="t" style="left:1288px;top:272.9px;font-size:15px;line-height:15px;color:#fff;font-weight:700;">Time Estimation</div>
<div class="r" style="left:1277px;top:293px;width:518px;height:1px;background:#a8a8a8"></div>
<div class="t" style="left:1288px;top:298.5px;font-size:15.5px;line-height:15.5px;color:#fff;font-weight:400;">Prepare and timelapse time:</div>
<div class="t" style="left:1489px;top:298.5px;font-size:15.5px;line-height:15.5px;color:#fff;font-weight:400;">6m15s + 2m37s</div>
<div class="t" style="left:1288px;top:320.2px;font-size:15.5px;line-height:15.5px;color:#fff;font-weight:400;">Model printing time:</div>
<div class="t" style="left:1489px;top:320.2px;font-size:15.5px;line-height:15.5px;color:#fff;font-weight:400;">17m10s</div>
<div class="t" style="left:1288px;top:341.9px;font-size:15.5px;line-height:15.5px;color:#fff;font-weight:400;">Total time:</div>
<div class="t" style="left:1489px;top:341.9px;font-size:15.5px;line-height:15.5px;color:#fff;font-weight:400;">26m3s</div>
<div class="t" style="left:1288px;top:369.1px;font-size:15px;line-height:15px;color:#fff;font-weight:700;">Options</div>
<div class="t" style="left:1536px;top:369.1px;font-size:15px;line-height:15px;color:#fff;font-weight:700;">Display</div>
<div class="r" style="left:1277px;top:389px;width:518px;height:1px;background:#a8a8a8"></div>
<div class="r" style="left:1289px;top:395.8px;width:10px;height:10.0px;background:#3c50b4"></div>
<div class="t" style="left:1308px;top:394.7px;font-size:15.5px;line-height:15.5px;color:#fff;font-weight:400;">Travel</div>
<div class="r" style="left:1540px;top:393.3px;width:18px;height:18.0px;background:#555"></div>
<div class="r" style="left:1289px;top:419.8px;width:10px;height:10.0px;background:#d21ed2"></div>
<div class="t" style="left:1308px;top:418.7px;font-size:15.5px;line-height:15.5px;color:#fff;font-weight:400;">Retract</div>
<div class="r" style="left:1540px;top:417.3px;width:18px;height:18.0px;background:#555"></div>
<div class="r" style="left:1289px;top:443.8px;width:10px;height:10.0px;background:#3cb4d2"></div>
<div class="t" style="left:1308px;top:442.7px;font-size:15.5px;line-height:15.5px;color:#fff;font-weight:400;">Unretract</div>
<div class="r" style="left:1540px;top:441.3px;width:18px;height:18.0px;background:#555"></div>
<div class="r" style="left:1289px;top:467.8px;width:10px;height:10.0px;background:#f0f000"></div>
<div class="t" style="left:1308px;top:466.7px;font-size:15.5px;line-height:15.5px;color:#fff;font-weight:400;">Wipe</div>
<div class="r" style="left:1540px;top:465.3px;width:18px;height:18.0px;background:#555"></div>
<div class="r" style="left:1289px;top:491.8px;width:10px;height:10.0px;background:#e6e6e6"></div>
<div class="t" style="left:1308px;top:490.7px;font-size:15.5px;line-height:15.5px;color:#fff;font-weight:400;">Seams</div>
<div class="r" style="left:1540px;top:489.3px;width:18px;height:18.0px;background:#555"></div>
<svg class="r" style="left:1542px;top:490px;" width="14" height="12" viewBox="0 0 14 12"><path d="M1.5,6 L5.5,10 L12.5,2" fill="none" stroke="#00ae42" stroke-width="1.8"/></svg>
</body></html>
